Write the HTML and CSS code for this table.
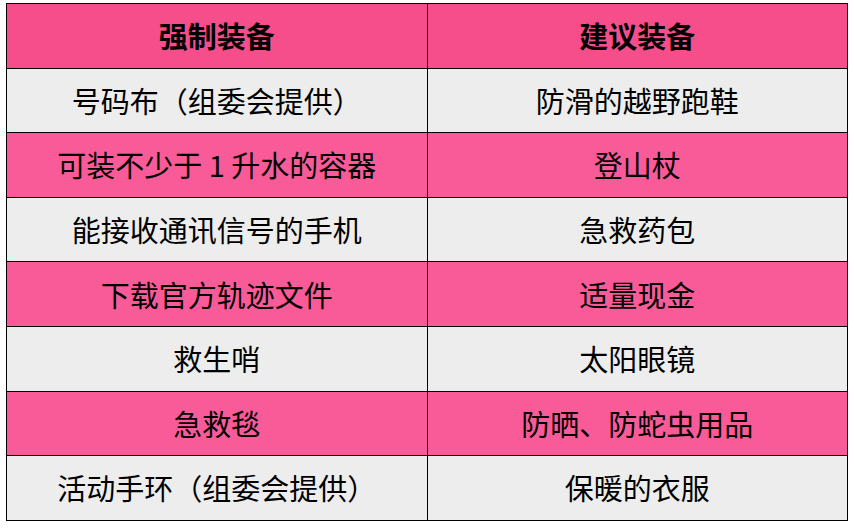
FILE: index.html
```html
<!DOCTYPE html>
<html lang="zh">
<head>
<meta charset="utf-8">
<link rel="stylesheet" href="styles.css">
</head>
<body>
<table class="gear">
  <thead>
    <tr class="head"><th>强制装备</th><th>建议装备</th></tr>
  </thead>
  <tbody>
    <tr class="gray"><td>号码布（组委会提供）</td><td>防滑的越野跑鞋</td></tr>
    <tr class="pink"><td>可装不少于 1 升水的容器</td><td>登山杖</td></tr>
    <tr class="gray"><td>能接收通讯信号的手机</td><td>急救药包</td></tr>
    <tr class="pink"><td>下载官方轨迹文件</td><td>适量现金</td></tr>
    <tr class="gray"><td>救生哨</td><td>太阳眼镜</td></tr>
    <tr class="pink"><td>急救毯</td><td>防晒、防蛇虫用品</td></tr>
    <tr class="gray"><td>活动手环（组委会提供）</td><td>保暖的衣服</td></tr>
  </tbody>
</table>
</body>
</html>
```
FILE: styles.css
```css
html, body {
  margin: 0;
  padding: 0;
  background: #ffffff;
}
body {
  padding: 3px 0 0 6px;
  font-family: "Microsoft YaHei", "Noto Sans CJK SC", "Noto Sans", sans-serif;
  color: #000;
}
.gear {
  border-collapse: collapse;
  width: 842px;
  table-layout: fixed;
}
.gear th, .gear td {
  border: 1px solid #000;
  height: 63.6px;
  padding: 0;
  text-align: center;
  vertical-align: middle;
  font-size: 29px;
  line-height: 1;
}
.gear th {
  font-weight: bold;
}
.head {
  background: #f64d8b;
}
.pink {
  background: #f95b99;
}
.gray {
  background: #ededed;
}
```
